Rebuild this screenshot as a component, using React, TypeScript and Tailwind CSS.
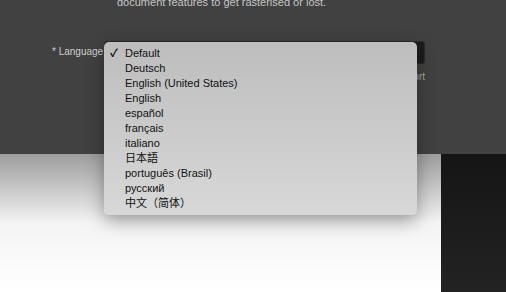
import React from "react";

const LANGUAGES = [
  "Default",
  "Deutsch",
  "English (United States)",
  "English",
  "español",
  "français",
  "italiano",
  "日本語",
  "português (Brasil)",
  "русский",
  "中文（简体）",
];

export default function App() {
  return (
    <div
      className="relative w-[506px] h-[292px] overflow-hidden"
      style={{ fontFamily: '"Liberation Sans", "Noto Sans CJK SC", sans-serif' }}
    >
      {/* Dialog body */}
      <div className="flex flex-col h-[154px] bg-[#414141] overflow-hidden">
        <p className="pl-[117px] -mt-[5px] text-[11px] leading-[14px] text-[#c4c4c4]">
          document features to get rasterised or lost.
        </p>

        {/* Language row */}
        <div className="mt-[32px] flex items-start">
          <label className="w-[104px] pl-[52px] pt-[4px] text-[10px] leading-[14px] text-[#cfcfcf] whitespace-nowrap">
            * Language
          </label>
          <div className="w-[321px] h-[23px] rounded-[3px] border border-[#2a2a2a] bg-[#1c1c1c]" />
        </div>
        <div className="mt-[6px] w-[425px] text-right text-[10px] leading-[14px] text-[#a8a8a8]">
          Keep the original support
        </div>
      </div>

      {/* Lower page */}
      <div className="flex h-[138px]">
        <div className="w-[441px] bg-gradient-to-b from-[#9d9d9d] via-[#f4f4f4] via-50% to-white" />
        <div className="flex-1 bg-gradient-to-b from-[#151515] to-[#232323]" />
      </div>

      {/* Popup menu */}
      <ul className="absolute left-[104px] top-[42px] w-[313px] h-[173px] rounded-[5px] bg-gradient-to-b from-[#bdbdbd] to-[#d8d8d8] pt-[4px] shadow-[0_6px_18px_rgba(0,0,0,0.35)] text-[11px] leading-[15px] text-[#111]">
        {LANGUAGES.map((lang, i) => (
          <li key={lang} className="flex">
            <span className="w-[21px] pl-[6px] font-bold">{i === 0 ? "✓" : ""}</span>
            <span>{lang}</span>
          </li>
        ))}
      </ul>
    </div>
  );
}
